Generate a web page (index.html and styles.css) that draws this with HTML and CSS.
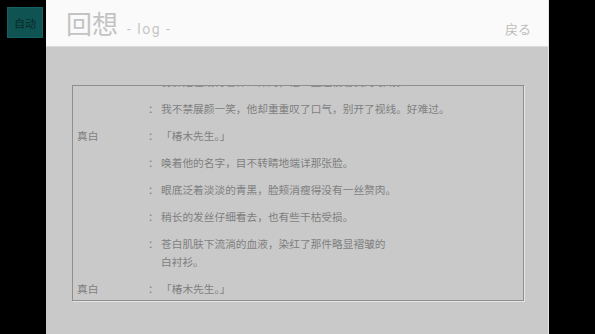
FILE: index.html
```html
<!DOCTYPE html>
<html lang="zh">
<head>
<meta charset="utf-8">
<link rel="stylesheet" href="styles.css">
</head>
<body>
<div class="app">
  <div class="side">
    <div class="auto-btn">自动</div>
  </div>
  <div class="panel">
    <header class="head">
      <div class="title"><span class="title-main">回想</span><span class="title-sub">- log -</span></div>
      <div class="back">戻る</div>
    </header>
    <div class="log-box">
      <div class="log-list">
        <div class="row"><span class="name"></span><span class="colon">：</span><span class="text">仿佛是在期待着什么似的，他一直注视着我的眼睛。</span></div>
        <div class="row"><span class="name"></span><span class="colon">：</span><span class="text">我不禁展颜一笑，他却重重叹了口气，别开了视线。好难过。</span></div>
        <div class="row"><span class="name">真白</span><span class="colon">：</span><span class="text">「椿木先生。」</span></div>
        <div class="row"><span class="name"></span><span class="colon">：</span><span class="text">唤着他的名字，目不转睛地端详那张脸。</span></div>
        <div class="row"><span class="name"></span><span class="colon">：</span><span class="text">眼底泛着淡淡的青黑，脸颊消瘦得没有一丝赘肉。</span></div>
        <div class="row"><span class="name"></span><span class="colon">：</span><span class="text">稍长的发丝仔细看去，也有些干枯受损。</span></div>
        <div class="row"><span class="name"></span><span class="colon">：</span><span class="text">苍白肌肤下流淌的血液，染红了那件略显褶皱的<br>白衬衫。</span></div>
        <div class="row"><span class="name">真白</span><span class="colon">：</span><span class="text">「椿木先生。」</span></div>
      </div>
    </div>
  </div>
</div>
</body>
</html>
```

FILE: styles.css
```css
html, body {
  margin: 0;
  padding: 0;
  background: #000;
}
body {
  width: 595px;
  height: 334px;
  overflow: hidden;
  font-family: "Noto Sans CJK SC", "Noto Sans", sans-serif;
}
.app {
  display: flex;
  height: 334px;
}
.side {
  width: 46px;
  flex: none;
  padding: 7px 0 0 7px;
  box-sizing: border-box;
}
.auto-btn {
  width: 36px;
  height: 31px;
  background: #0f5352;
  color: #092b2a;
  font-size: 11px;
  display: flex;
  align-items: center;
  justify-content: center;
  box-shadow: inset 0 0 0 1px #136160;
}
.panel {
  width: 502px;
  flex: none;
  background: #c9c9c9;
  border-right: 1px solid #e2e2e2;
  display: flex;
  flex-direction: column;
}
.head {
  height: 47px;
  background: #fafafa;
  display: flex;
  align-items: flex-end;
  justify-content: space-between;
  padding: 0 17px 7px 20px;
  box-sizing: border-box;
  border-bottom: 1px solid #dcdcdc;
}
.title {
  display: flex;
  align-items: baseline;
  gap: 9px;
}
.title-main {
  font-size: 26px;
  line-height: 32px;
  color: #c3c3c3;
}
.title-sub {
  font-family: Roboto, "Noto Sans", sans-serif;
  font-size: 14px;
  letter-spacing: 1.5px;
  color: #c6c6c6;
}
.back {
  font-family: "Noto Sans CJK JP", sans-serif;
  font-size: 13px;
  color: #bdbdbd;
  margin-bottom: 1px;
}
.log-box {
  margin: 38px 0 0 26px;
  width: 452px;
  height: 216px;
  box-sizing: border-box;
  border: 1px solid #8e8e8e;
  box-shadow: 1px 1px 0 #e4e4e4;
  overflow: hidden;
}
.log-list {
  margin-top: -13px;
  padding-left: 4px;
  display: flex;
  flex-direction: column;
  gap: 9px;
}
.row {
  display: grid;
  grid-template-columns: 71px 13px 1fr;
  font-size: 10.7px;
  line-height: 18px;
  color: #7f7f7f;
}
.colon {
  text-align: left;
}
```
